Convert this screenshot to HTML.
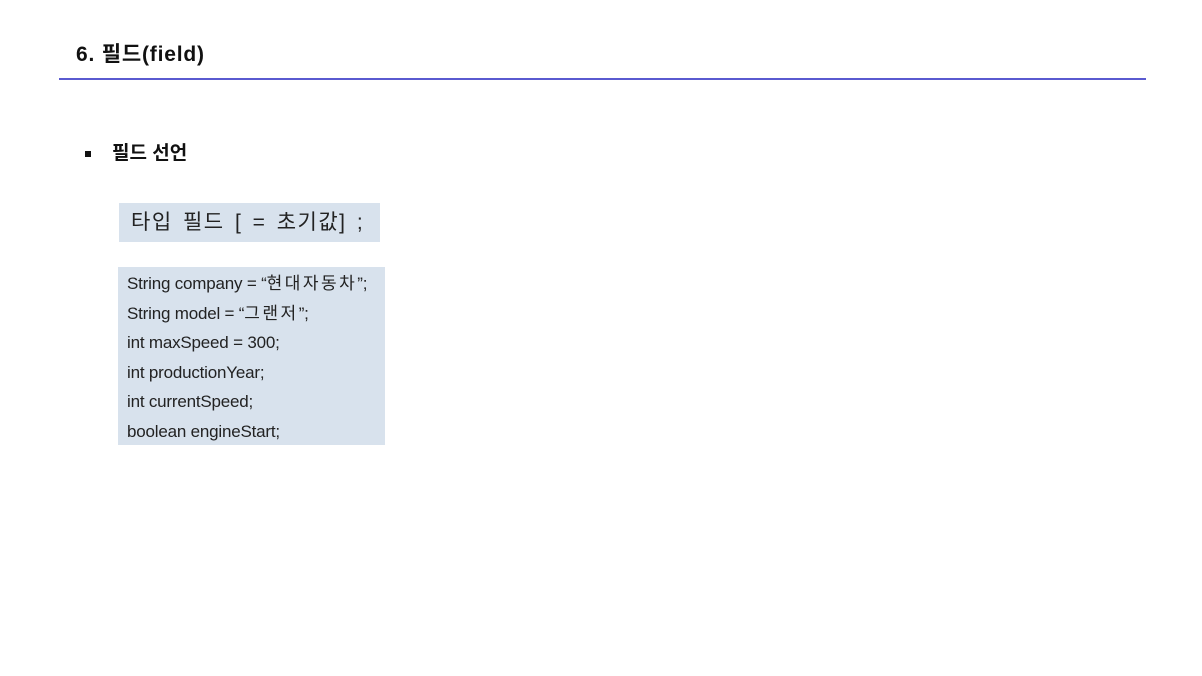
<!DOCTYPE html>
<html><head><meta charset="utf-8"><style>
body{margin:0;width:1202px;height:676px;background:#fff;position:relative;overflow:hidden;font-family:"Liberation Sans","Noto Sans CJK KR",sans-serif;color:#111}
.a{position:absolute}
.k{letter-spacing:2.5px}
</style></head><body>
<div class="a" style="left:76px;top:42px;font-size:21px;font-weight:bold;line-height:26px;letter-spacing:0.8px">6. 필드(field)</div>
<div class="a" style="left:59px;top:78px;width:1087px;height:2px;background:#5a5ad0"></div>
<div class="a" style="left:85px;top:151px;width:6px;height:6px;background:#111"></div>
<div class="a" style="left:112px;top:142px;font-size:19px;font-weight:bold;line-height:24px">필드 선언</div>
<div class="a" style="left:119px;top:203px;width:261px;height:39px;background:#d8e2ed"></div>
<div class="a" style="left:131px;top:209px;font-size:21px;line-height:28px;color:#222;letter-spacing:1.5px;word-spacing:3px;white-space:nowrap">타입 필드 [ = 초기값] ;</div>
<div class="a" style="left:118px;top:267px;width:267px;height:178px;background:#d8e2ed"></div>
<div class="a" style="left:127px;top:269px;font-size:17px;line-height:29.6px;color:#222;white-space:nowrap;letter-spacing:-0.2px">String company = “<span class="k">현대자동차</span>”;<br>String model = “<span class="k">그랜저</span>”;<br>int maxSpeed = 300;<br>int productionYear;<br>int currentSpeed;<br>boolean engineStart;</div>
</body></html>
